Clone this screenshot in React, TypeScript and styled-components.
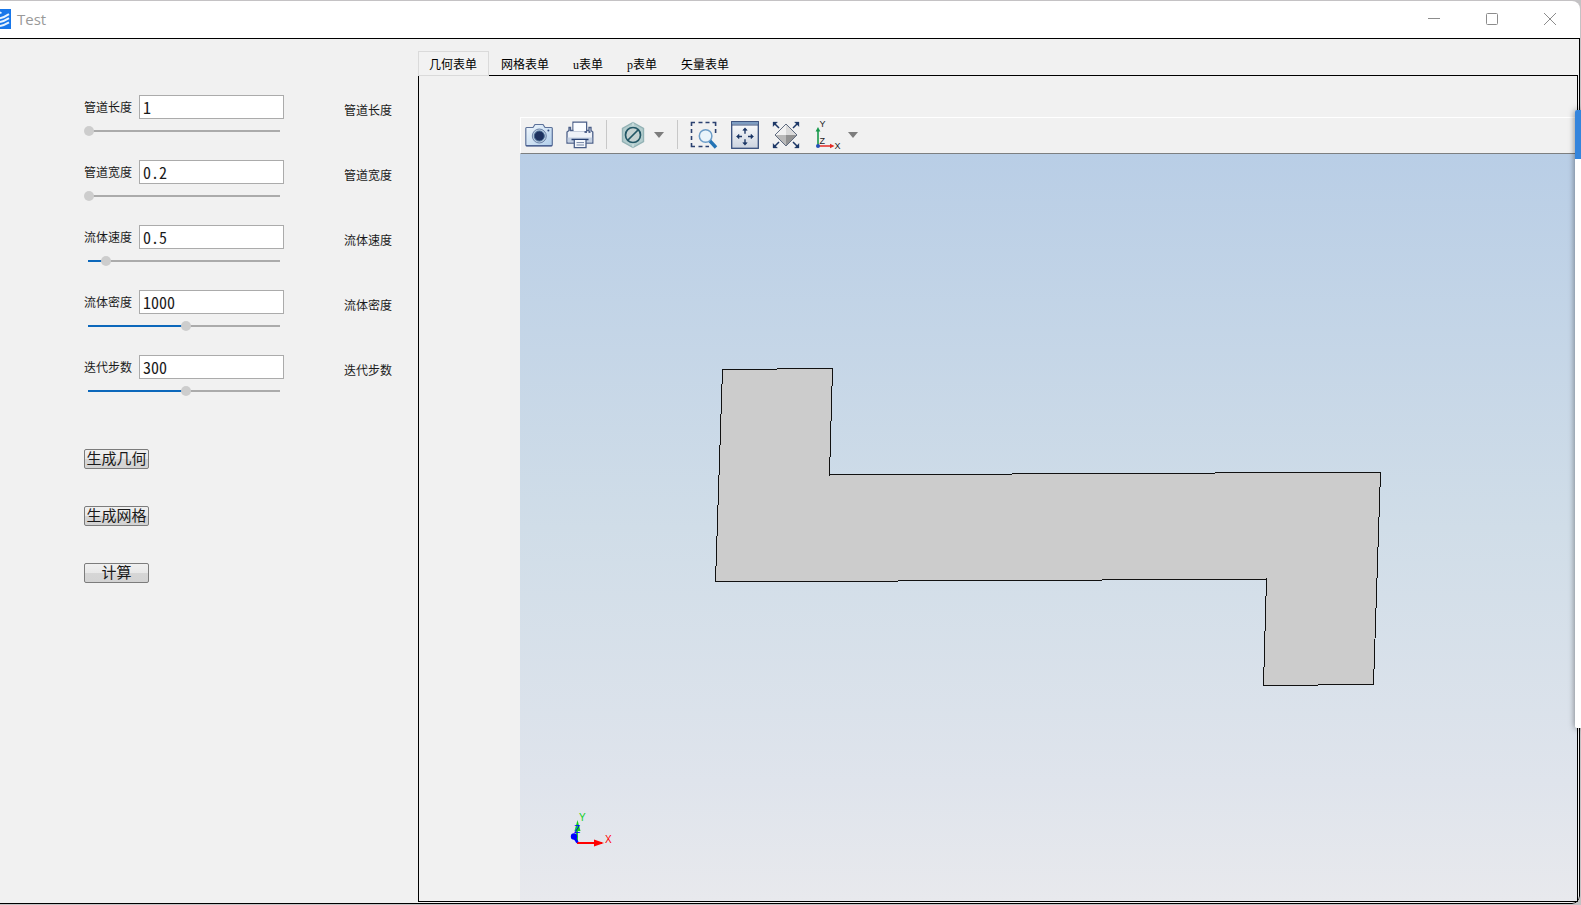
import React, { useState } from "react";
import styled, { createGlobalStyle, css } from "styled-components";

const GlobalStyle = createGlobalStyle`
  * { box-sizing: border-box; }
  body { margin: 0; background: #c4c4c6; }
  button, input { font: inherit; color: inherit; margin: 0; }
`;

const Desktop = styled.div`
  position: relative;
  display: flex;
  min-height: 100vh;
  padding: 1px 1px 1px 0;
  background: #c4c2c4;
  overflow: hidden;
  font-family: "Liberation Serif", "Noto Sans CJK SC", serif;
  font-size: 12px;
  color: #1a1a1a;
`;

const Window = styled.div`
  flex: 1;
  display: flex;
  flex-direction: column;
  background: #ffffff;
  border-radius: 0 8px 8px 0;
  overflow: hidden;
`;

const TitleBar = styled.header`
  display: flex;
  align-items: center;
  height: 37px;
  padding-bottom: 2px;
  gap: 6px;
`;

const Title = styled.h1`
  flex: 1;
  margin: 0;
  font: 400 15px/20px "Open Sans", "Noto Sans", sans-serif;
  color: #999999;
`;

const WindowButtons = styled.div`
  display: flex;
  padding-right: 1px;
`;

const WindowButton = styled.button`
  display: flex;
  align-items: center;
  justify-content: center;
  width: 58px;
  height: 34px;
  padding: 0;
  border: 0;
  background: none;
`;

const Body = styled.div`
  flex: 1;
  display: flex;
  padding: 0 1px 1px 0;
  border: solid #000000;
  border-width: 1px 1px 1px 0;
  border-bottom-right-radius: 8px;
  background: #f1f1f1;
`;

const Sidebar = styled.form`
  flex: none;
  width: 418px;
  padding: 56px 0 0 84px;
  display: flex;
  flex-direction: column;
  gap: 52px;
`;

const Fields = styled.div`
  display: flex;
  flex-direction: column;
  gap: 23px;
`;

const Field = styled.div`
  display: flex;
  gap: 60px;
  height: 42px;
`;

const Control = styled.div`
  width: 200px;
  display: flex;
  flex-direction: column;
  gap: 6px;
`;

const InputRow = styled.div`
  display: flex;
  justify-content: space-between;
  height: 24px;
`;

const Label = styled.label`
  line-height: 26px;
  white-space: nowrap;
`;

const Caption = styled.span`
  line-height: 32px;
  white-space: nowrap;
`;

const TextInput = styled.input`
  width: 145px;
  height: 24px;
  padding: 0 3px;
  border: 1px solid #ababab;
  background: #ffffff;
  font-family: "Noto Sans CJK SC", sans-serif;
  font-feature-settings: "hwid";
  font-size: 16px;
  line-height: 22px;
  outline: none;
`;

const thumb = css`
  width: 10px;
  height: 10px;
  border: 0;
  border-radius: 50%;
  background: #cdcdcd;
`;

const Slider = styled.input`
  appearance: none;
  width: 200px;
  height: 12px;
  padding: 0;
  background-color: transparent;
  background-image: linear-gradient(
    to right,
    #0c68bb var(--fill),
    #ababab var(--fill)
  );
  background-size: calc(100% - 8px) 2px;
  background-position: center;
  background-repeat: no-repeat;
  outline: none;
  &::-webkit-slider-thumb { appearance: none; ${thumb} }
  &::-moz-range-thumb { ${thumb} }
`;

const Actions = styled.div`
  display: flex;
  flex-direction: column;
  gap: 37px;
`;

const ActionButton = styled.button`
  width: 65px;
  height: 20px;
  padding: 0;
  border: 1px solid #7c7c7c;
  border-radius: 2px;
  background: linear-gradient(#f0f0f0, #e8e8e8 50%, #d6d6d6 50%, #d3d3d3);
  font-size: 15px;
  line-height: 18px;
  white-space: nowrap;
`;

const Main = styled.main`
  flex: 1;
  min-width: 0;
  display: flex;
  flex-direction: column;
  padding-top: 12px;
`;

const TabList = styled.div`
  position: relative;
  display: flex;
  gap: 1px;
`;

const Tab = styled.button<{ $active: boolean }>`
  height: 25px;
  margin-bottom: -1px;
  padding: 2px 11px 0 10px;
  border: 1px solid ${(p) => (p.$active ? "#dadada" : "transparent")};
  background: ${(p) => (p.$active ? "#f2f2f2" : "transparent")};
  color: #000000;
  font-size: 12px;
  line-height: 20px;
`;

const TabPanel = styled.section`
  flex: 1;
  display: flex;
  flex-direction: column;
  padding: 41px 0 0 101px;
  border: 1px solid #000000;
`;

const Toolbar = styled.div`
  display: flex;
  align-items: center;
  gap: 5px;
  height: 37px;
  padding-bottom: 2px;
  border: solid #ffffff;
  border-width: 1px 0 1px 1px;
  border-bottom-color: #7d7f80;
`;

const Split = styled.div`
  display: flex;
  gap: 3px;
`;

const ToolButton = styled.button`
  display: flex;
  align-items: center;
  justify-content: center;
  width: 36px;
  height: 32px;
  padding: 0;
  border: 0;
  background: none;
`;

const MenuButton = styled(ToolButton)`
  width: 15px;
  justify-content: flex-start;
`;

const Separator = styled.div`
  width: 1px;
  height: 29px;
  margin: 0 3px;
  background: #c8c8c8;
`;

const Viewport = styled.div`
  flex: 1;
  display: flex;
  background: linear-gradient(#b9cee6, #d0dde8 50%, #dfe4ec 84%, #e8e9ed);
`;

const Drawing = styled.svg`
  flex: 1;
  min-width: 0;
  width: 100%;
`;

const DockedPopup = styled.aside`
  position: absolute;
  top: 110px;
  right: 0;
  width: 6px;
  height: 618px;
  border-radius: 2px 0 0 2px;
  background: linear-gradient(#3585dc 49px, #ffffff 49px);
  box-shadow: 0 0 6px rgba(0, 0, 0, 0.5);
`;

const AppLogo = () => (
  <svg width="11" height="20" viewBox="0 0 11 20" aria-hidden="true">
    <rect width="11" height="20" fill="#1877ea" />
    <g fill="none" stroke="#e8f4ff" strokeWidth="2">
      <path d="M0 4.2 1.4 3.2" />
      <path d="M0 9.2Q4 8.6 9 5.2" />
      <path d="M0 13Q4 12.4 9 9.2" />
      <path d="M0 17Q4 16.4 9 13.4" />
    </g>
  </svg>
);

const CameraIcon = () => (
  <svg width="28" height="24" viewBox="0 0 28 24" aria-hidden="true">
    <defs>
      <linearGradient id="cam" x1="0" y1="0" x2="1" y2="1">
        <stop offset="0" stopColor="#f2f8fd" />
        <stop offset="1" stopColor="#afcdea" />
      </linearGradient>
    </defs>
    <path d="M1.5 4.5H8L10 1.5H18L20 4.5H26.5Q27.3 4.5 27.3 5.5V21.5Q27.3 22.8 26 22.8H2Q.8 22.8 .8 21.5V5.5Q.8 4.5 1.5 4.5Z" fill="url(#cam)" stroke="#5c7199" strokeWidth="1.2" />
    <path d="M.8 22.8H27.2" stroke="#3b5288" />
    <circle cx="14.3" cy="13" r="7" fill="#b7cbe0" stroke="#6c83a8" />
    <circle cx="14.3" cy="13" r="5" fill="#1d315f" stroke="#456890" />
    <circle cx="23.4" cy="7.6" r="1" fill="#31497b" />
  </svg>
);

const PrinterIcon = () => (
  <svg width="28" height="28" viewBox="0 0 28 28" aria-hidden="true">
    <g stroke="#4b5f88" strokeWidth="1.3">
      <path d="M7 10V1.2H20.6V10" fill="#fafcff" />
      <path d="M4.5 6.5V9.5H23V6.5H25V9.5L26.8 11V22H1V11L3 9.5V6.5Z" fill="#eef2f8" />
      <path d="M7.6 2H20V10H7.6Z" fill="#fafcff" stroke="none" />
      <path d="M1.6 16.5H26.2V21.4H1.6Z" fill="#c4d0e2" stroke="none" />
      <path d="M5.5 18.5H22.5" stroke="#263f72" />
      <path d="M8.3 19V26.6H20V19" fill="#f5f8fc" />
      <path d="M10.5 21.6H18M10.5 24H18" strokeWidth="1" stroke="#7385a5" />
      <path d="M18.5 11H21M22.5 11H24.5" stroke="#273c6e" />
    </g>
  </svg>
);

const HexIcon = () => (
  <svg width="24" height="28" viewBox="0 0 24 28" aria-hidden="true">
    <path d="M12 1.5 22.5 7.5V20.5L12 26.5 1.5 20.5V7.5Z" fill="#b4cdce" stroke="#93b2b5" strokeWidth="1.4" />
    <path d="M12 1.5V6M12 22V26.5" stroke="#dbe8e8" />
    <circle cx="12" cy="14" r="7.5" fill="#c6d2d2" stroke="#235766" strokeWidth="1.7" />
    <path d="M7 19 17 9" stroke="#235766" strokeWidth="1.7" />
  </svg>
);

const ArrowDown = () => (
  <svg width="10" height="6" viewBox="0 0 10 6" aria-hidden="true">
    <path d="M0 0H10L5 6Z" fill="#7d7d7d" />
  </svg>
);

const ZoomBoxIcon = () => (
  <svg width="28" height="28" viewBox="0 0 28 28" aria-hidden="true">
    <g fill="none" stroke="#2b4170" strokeWidth="1.6">
      <path d="M1.5 5V1.5H5M8.5 1.5H12.5M15.5 1.5H19.5M22.5 1.5H25.6V5M25.6 8V12M1.5 8V12M1.5 15V19M1.5 22V25.5H5M8.5 25.5H12.5M15.5 25.5H19" />
    </g>
    <circle cx="15.6" cy="15" r="6.3" fill="#eaf4fb" stroke="#6d9dc8" strokeWidth="1.5" />
    <path d="M20 20 26 26.5" stroke="#2474b5" strokeWidth="3.4" />
  </svg>
);

const FitIcon = () => (
  <svg width="28" height="28" viewBox="0 0 28 28" aria-hidden="true">
    <defs>
      <linearGradient id="fit" x1="0" y1="0" x2="0" y2="1">
        <stop offset="0" stopColor="#ffffff" />
        <stop offset="1" stopColor="#ccd3df" />
      </linearGradient>
    </defs>
    <rect x=".7" y=".7" width="26.6" height="26.6" fill="url(#fit)" stroke="#374e7c" strokeWidth="1.3" />
    <path d="M1 1H27V3.5H1Z" fill="#7e9dc2" />
    <path d="M1 4H27" stroke="#374e7c" />
    <g fill="#1d3766" stroke="#1d3766">
      <path d="M14 8.5V12.8M14 18.2V22.5M7 15.5H11M17 15.5H21" strokeWidth="1.4" />
      <path d="M11.8 9.3 14 6.8 16.2 9.3ZM11.8 21.7 14 24.2 16.2 21.7ZM8 13.3 5.5 15.5 8 17.7ZM20 13.3 22.5 15.5 20 17.7Z" strokeWidth=".6" />
    </g>
  </svg>
);

const RotateIcon = () => (
  <svg width="28" height="28" viewBox="0 0 28 28" aria-hidden="true">
    <path d="M14 3 25 14H3Z" fill="#f1f1f1" />
    <path d="M14 3 25 14H14Z" fill="#dadada" />
    <path d="M3 14H14V25Z" fill="#b9b9b9" />
    <path d="M14 14H25L14 25Z" fill="#929292" />
    <path d="M14 3 25 14 14 25 3 14Z" fill="none" stroke="#5f6b80" />
    <g fill="#1d3766" stroke="#1d3766">
      <path d="M2 2 7 7M26 2 21 7M2 26 7 21M26 26 21 21" strokeWidth="1.5" />
      <path d="M1 1H5.5L1 5.5ZM27 1H22.5L27 5.5ZM1 27H5.5L1 22.5ZM27 27H22.5L27 22.5Z" strokeWidth=".3" />
    </g>
  </svg>
);

const AxesIcon = () => (
  <svg width="28" height="30" viewBox="0 0 28 30" fontFamily="Liberation Sans, sans-serif" fontSize="9" fill="#1c1c1c" aria-hidden="true">
    <path d="M5 26V10" stroke="#16984a" strokeWidth="1.6" />
    <path d="M2.6 11.5 5 7 7.4 11.5Z" fill="#16984a" />
    <path d="M5 26H18" stroke="#e52a24" strokeWidth="1.6" />
    <path d="M17 23.8 21.5 26 17 28.2Z" fill="#e52a24" />
    <circle cx="5" cy="26" r="2" fill="#2450b8" />
    <text x="6.5" y="7">Y</text>
    <text x="6.5" y="23.5">Z</text>
    <text x="21.5" y="28.5">X</text>
  </svg>
);

const FIELDS = [
  { id: "length", label: "管道长度", text: "1", position: 0 },
  { id: "width", label: "管道宽度", text: "0.2", position: 0 },
  { id: "speed", label: "流体速度", text: "0.5", position: 9 },
  { id: "density", label: "流体密度", text: "1000", position: 51 },
  { id: "steps", label: "迭代步数", text: "300", position: 51 },
];

const TABS = ["几何表单", "网格表单", "u表单", "p表单", "矢量表单"];

type FieldProps = { id: string; label: string; text: string; position: number };

function ParameterField({ id, label, text, position }: FieldProps) {
  const [value, setValue] = useState(text);
  const [slider, setSlider] = useState(position);
  return (
    <Field>
      <Control>
        <InputRow>
          <Label htmlFor={id}>{label}</Label>
          <TextInput id={id} value={value} onChange={(e) => setValue(e.target.value)} />
        </InputRow>
        <Slider
          type="range"
          aria-label={label}
          min={0}
          max={100}
          value={slider}
          onChange={(e) => setSlider(Number(e.target.value))}
          style={{ "--fill": `${slider}%` } as React.CSSProperties}
        />
      </Control>
      <Caption>{label}</Caption>
    </Field>
  );
}

function GeometryView() {
  return (
    <Viewport>
      <Drawing viewBox="0 0 1057 747" preserveAspectRatio="xMinYMin meet" role="img" aria-label="几何">
        <polygon
          points="202.5,215.5 312.5,214.5 309.5,321.5 309.5,320.9 860.5,318.2 853.5,530.5 743.5,531.5 746.5,424.5 746.5,425.2 195.5,427.9"
          fill="#cccccc"
          stroke="#111111"
          shapeRendering="crispEdges"
        />
        <g fontFamily="Liberation Sans, sans-serif" fontSize="10">
          <path d="M57 688V674" stroke="#19c832" strokeWidth="2" />
          <path d="M54.5 677 57.5 666 60.5 677Z" fill="#12cf1c" />
          <path d="M57 689H82" stroke="#ff0000" strokeWidth="2" />
          <path d="M74 685.6 84 689 74 692.4Z" fill="#ff0000" />
          <circle cx="54" cy="682.5" r="3.2" fill="#0000ff" />
          <path d="M54 683 57.5 688.5" stroke="#0000ff" strokeWidth="2.5" />
          <text x="59" y="667" fill="#12cf1c">Y</text>
          <text x="54" y="679" fill="#0000ff">Z</text>
          <text x="85" y="689" fill="#ff0000">X</text>
        </g>
      </Drawing>
    </Viewport>
  );
}

export default function App() {
  const [tab, setTab] = useState(0);
  return (
    <Desktop>
      <GlobalStyle />
      <Window>
        <TitleBar>
          <AppLogo />
          <Title>Test</Title>
          <WindowButtons>
            <WindowButton aria-label="最小化">
              <svg width="12" height="12" stroke="#8c8c8c"><path d="M0 5.5H12" /></svg>
            </WindowButton>
            <WindowButton aria-label="最大化">
              <svg width="12" height="12" fill="none" stroke="#8c8c8c"><rect x=".5" y=".5" width="11" height="11" rx="1" /></svg>
            </WindowButton>
            <WindowButton aria-label="关闭">
              <svg width="12" height="12" stroke="#8c8c8c"><path d="M0 0 12 12M12 0 0 12" /></svg>
            </WindowButton>
          </WindowButtons>
        </TitleBar>
        <Body>
          <Sidebar onSubmit={(e) => e.preventDefault()}>
            <Fields>
              {FIELDS.map((field) => (
                <ParameterField key={field.id} {...field} />
              ))}
            </Fields>
            <Actions>
              <ActionButton>生成几何</ActionButton>
              <ActionButton>生成网格</ActionButton>
              <ActionButton>计算</ActionButton>
            </Actions>
          </Sidebar>
          <Main>
            <TabList role="tablist">
              {TABS.map((name, i) => (
                <Tab key={name} role="tab" aria-selected={tab === i} $active={tab === i} onClick={() => setTab(i)}>
                  {name}
                </Tab>
              ))}
            </TabList>
            <TabPanel role="tabpanel">
              <Toolbar role="toolbar">
                <ToolButton aria-label="截图"><CameraIcon /></ToolButton>
                <ToolButton aria-label="打印"><PrinterIcon /></ToolButton>
                <Separator />
                <Split>
                  <ToolButton aria-label="选择"><HexIcon /></ToolButton>
                  <MenuButton aria-label="选择菜单"><ArrowDown /></MenuButton>
                </Split>
                <Separator />
                <ToolButton aria-label="框选缩放"><ZoomBoxIcon /></ToolButton>
                <ToolButton aria-label="适合窗口"><FitIcon /></ToolButton>
                <ToolButton aria-label="旋转"><RotateIcon /></ToolButton>
                <Split>
                  <ToolButton aria-label="视图方向"><AxesIcon /></ToolButton>
                  <MenuButton aria-label="视图菜单"><ArrowDown /></MenuButton>
                </Split>
              </Toolbar>
              <GeometryView />
            </TabPanel>
          </Main>
        </Body>
      </Window>
      <DockedPopup />
    </Desktop>
  );
}
